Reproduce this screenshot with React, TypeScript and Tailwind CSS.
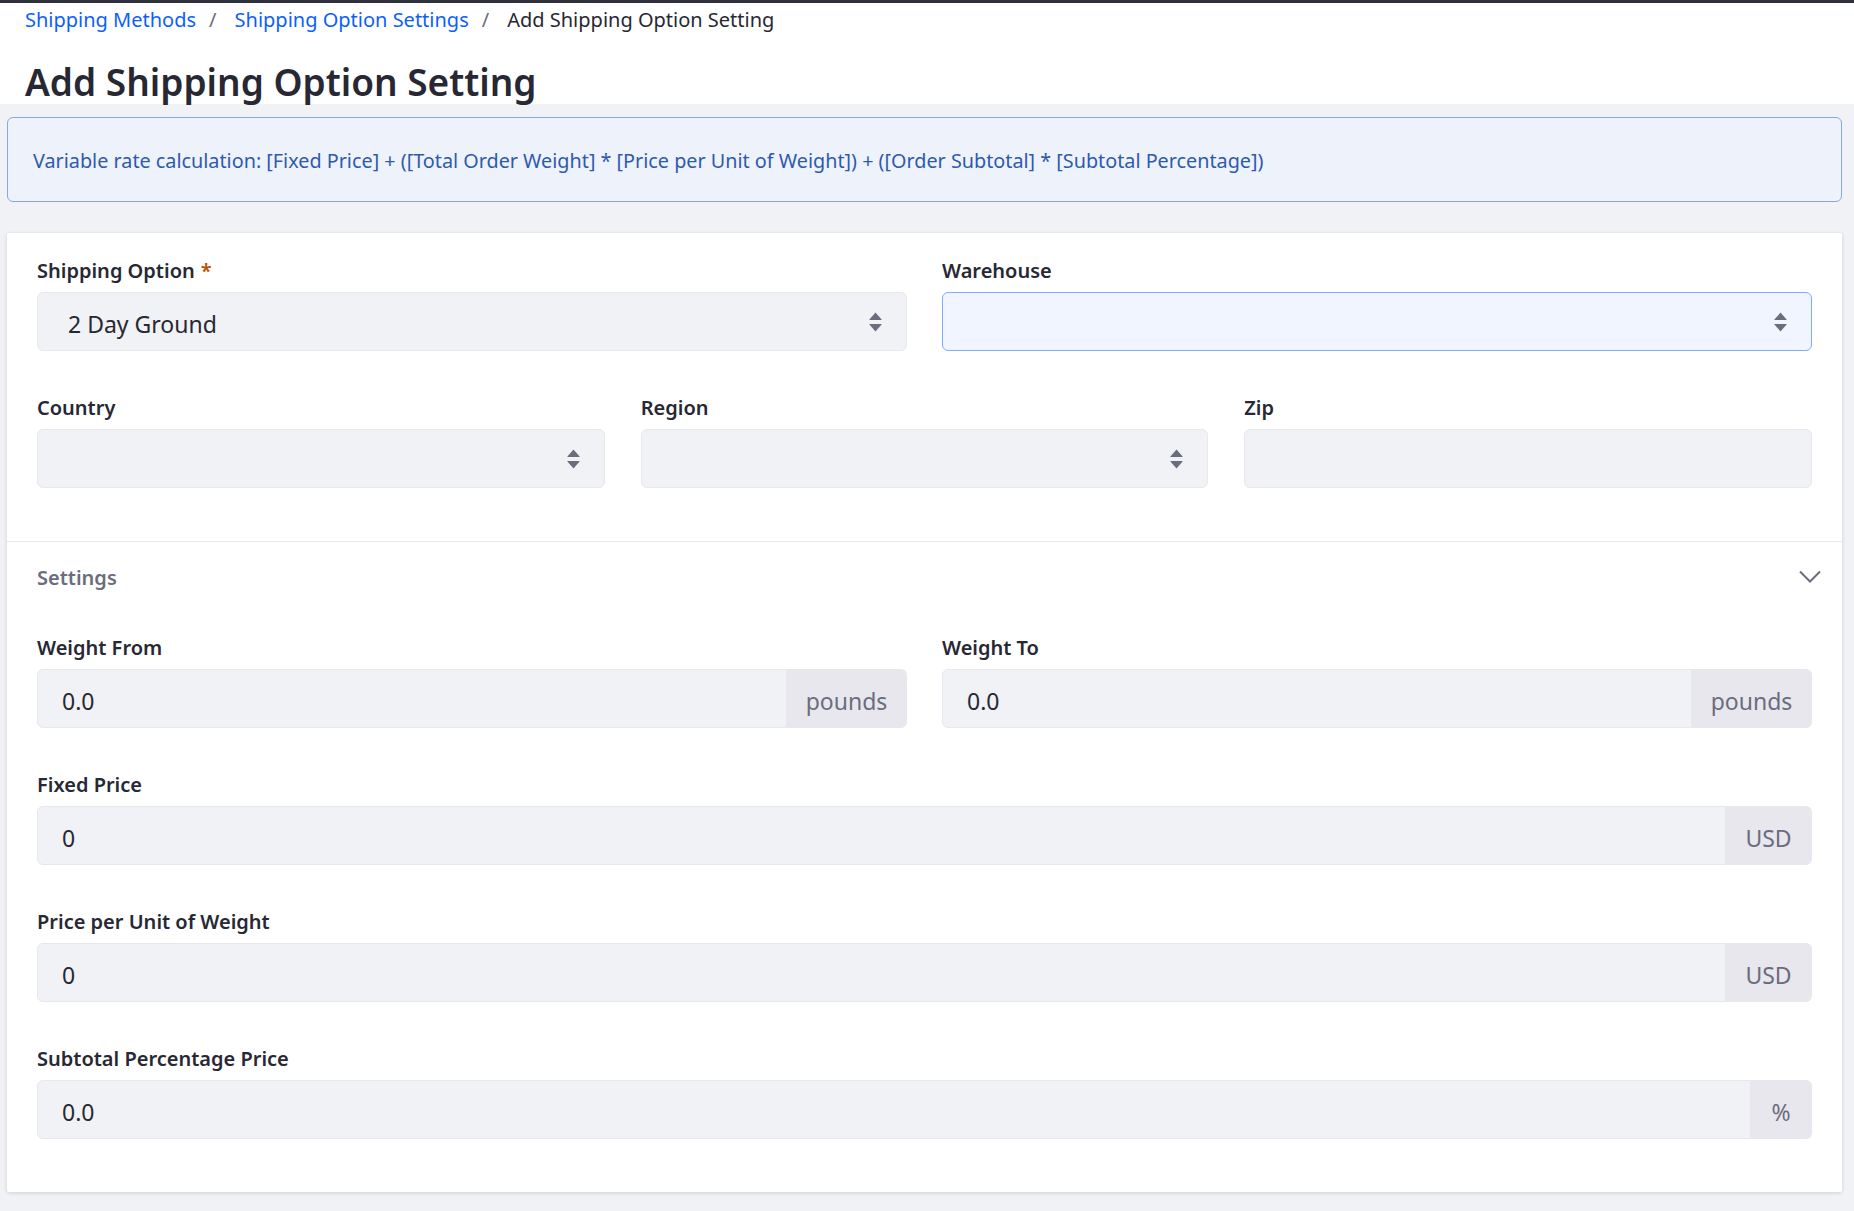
import type { ReactNode } from "react";

const SelectArrows = () => (
  <svg
    width="13"
    height="20"
    viewBox="0 0 13 20"
    fill="#6b6c7e"
    className="absolute right-[24px] top-1/2 -translate-y-1/2"
  >
    <path d="M6.5 0.6 L12.6 7.6 Q12.9 8 12.4 8 L0.6 8 Q0.1 8 0.4 7.6 Z" />
    <path d="M0.6 12 L12.4 12 Q12.9 12 12.6 12.4 L6.5 19.4 L0.4 12.4 Q0.1 12 0.6 12 Z" />
  </svg>
);

function Label({ children, required }: { children: ReactNode; required?: boolean }) {
  return (
    <label className="block h-[30px] leading-[30px] mb-[6px] text-[20px] font-semibold text-[#272833]">
      {children}
      {required && <span className="ml-[6px] text-[#b95000]">*</span>}
    </label>
  );
}

function Select({ value, focused }: { value?: string; focused?: boolean }) {
  return (
    <div
      className={
        focused
          ? "relative flex items-center h-[59px] pl-[30px] pt-[5px] rounded-[6px] border border-[#80acff] bg-[#f0f5ff] text-[23px]"
          : "relative flex items-center h-[59px] pl-[30px] pt-[5px] rounded-[6px] border border-[#e7e7ed] bg-[#f1f2f5] text-[23px]"
      }
    >
      {value}
      <SelectArrows />
    </div>
  );
}

function InputGroup({ value, unit, unitWidth }: { value: string; unit: string; unitWidth: string }) {
  return (
    <div className="flex h-[59px] text-[23px]">
      <div className="flex-1 flex items-center pl-[24px] pt-[5px] rounded-l-[6px] border border-[#e7e7ed] bg-[#f1f2f5]">
        {value}
      </div>
      <div
        className={`flex items-center justify-center pt-[5px] rounded-r-[6px] border border-l-0 border-[#e7e7ed] bg-[#e7e7ed] text-[#6b6c7e] ${unitWidth}`}
      >
        {unit}
      </div>
    </div>
  );
}

export default function App() {
  return (
    <div className="min-h-screen bg-[#f1f2f5] font-['Noto_Sans',sans-serif] text-[#272833]">
      <div className="bg-white">
        <div className="h-[3px] bg-[#30313f]" />
        <nav className="flex items-center h-[30px] mt-[2px] pl-[25px] text-[20px] leading-[30px]">
          <a className="text-[#0b5fff]">Shipping Methods</a>
          <span className="ml-[13px] mr-[18px] text-[#6b6c7e]">/</span>
          <a className="text-[#0b5fff]">Shipping Option Settings</a>
          <span className="ml-[13px] mr-[18px] text-[#6b6c7e]">/</span>
          <span>Add Shipping Option Setting</span>
        </nav>
        <h1 className="mt-[25px] h-[44px] leading-[44px] pl-[25px] text-[37px] font-semibold">
          Add Shipping Option Setting
        </h1>
      </div>

      <div className="ml-[7px] mr-[12px] pb-[19px]">
        <div className="mt-[13px] h-[85px] flex items-center pt-[3px] pl-[25px] rounded-[6px] border border-[#89a7e0] bg-[#eef2fa] text-[19.8px] text-[#2e5aac]">
          Variable rate calculation: [Fixed Price] + ([Total Order Weight] * [Price per Unit of Weight]) + ([Order
          Subtotal] * [Subtotal Percentage])
        </div>

        <div className="mt-[31px] bg-white rounded-[2px] shadow-[0_1px_4px_rgba(0,0,0,0.14)]">
          <div className="px-[30px] pt-[23px] pb-[53px] flex flex-col gap-[42px]">
            <div className="grid grid-cols-2 gap-x-[35px]">
              <div>
                <Label required>Shipping Option</Label>
                <Select value="2 Day Ground" />
              </div>
              <div>
                <Label>Warehouse</Label>
                <Select focused />
              </div>
            </div>
            <div className="grid grid-cols-3 gap-x-[36px]">
              <div>
                <Label>Country</Label>
                <Select />
              </div>
              <div>
                <Label>Region</Label>
                <Select />
              </div>
              <div>
                <Label>Zip</Label>
                <div className="h-[59px] rounded-[6px] border border-[#e7e7ed] bg-[#f1f2f5]" />
              </div>
            </div>
          </div>

          <div className="border-t border-[#e7e7ed]">
            <div className="flex items-center justify-between pt-[21px] pl-[30px] pr-[21px]">
              <span className="h-[30px] leading-[30px] text-[20px] font-semibold text-[#6b6c7e]">Settings</span>
              <svg width="22" height="13" viewBox="0 0 22 13" className="-mt-[4px]">
                <path d="M1 1.5 L11 11.5 L21 1.5" fill="none" stroke="#6b6c7e" strokeWidth="2" />
              </svg>
            </div>
            <div className="px-[30px] pt-[40px] pb-[53px] flex flex-col gap-[42px]">
              <div className="grid grid-cols-2 gap-x-[35px]">
                <div>
                  <Label>Weight From</Label>
                  <InputGroup value="0.0" unit="pounds" unitWidth="w-[120px]" />
                </div>
                <div>
                  <Label>Weight To</Label>
                  <InputGroup value="0.0" unit="pounds" unitWidth="w-[120px]" />
                </div>
              </div>
              <div>
                <Label>Fixed Price</Label>
                <InputGroup value="0" unit="USD" unitWidth="w-[86px]" />
              </div>
              <div>
                <Label>Price per Unit of Weight</Label>
                <InputGroup value="0" unit="USD" unitWidth="w-[86px]" />
              </div>
              <div>
                <Label>Subtotal Percentage Price</Label>
                <InputGroup value="0.0" unit="%" unitWidth="w-[61px]" />
              </div>
            </div>
          </div>
        </div>
      </div>
    </div>
  );
}
